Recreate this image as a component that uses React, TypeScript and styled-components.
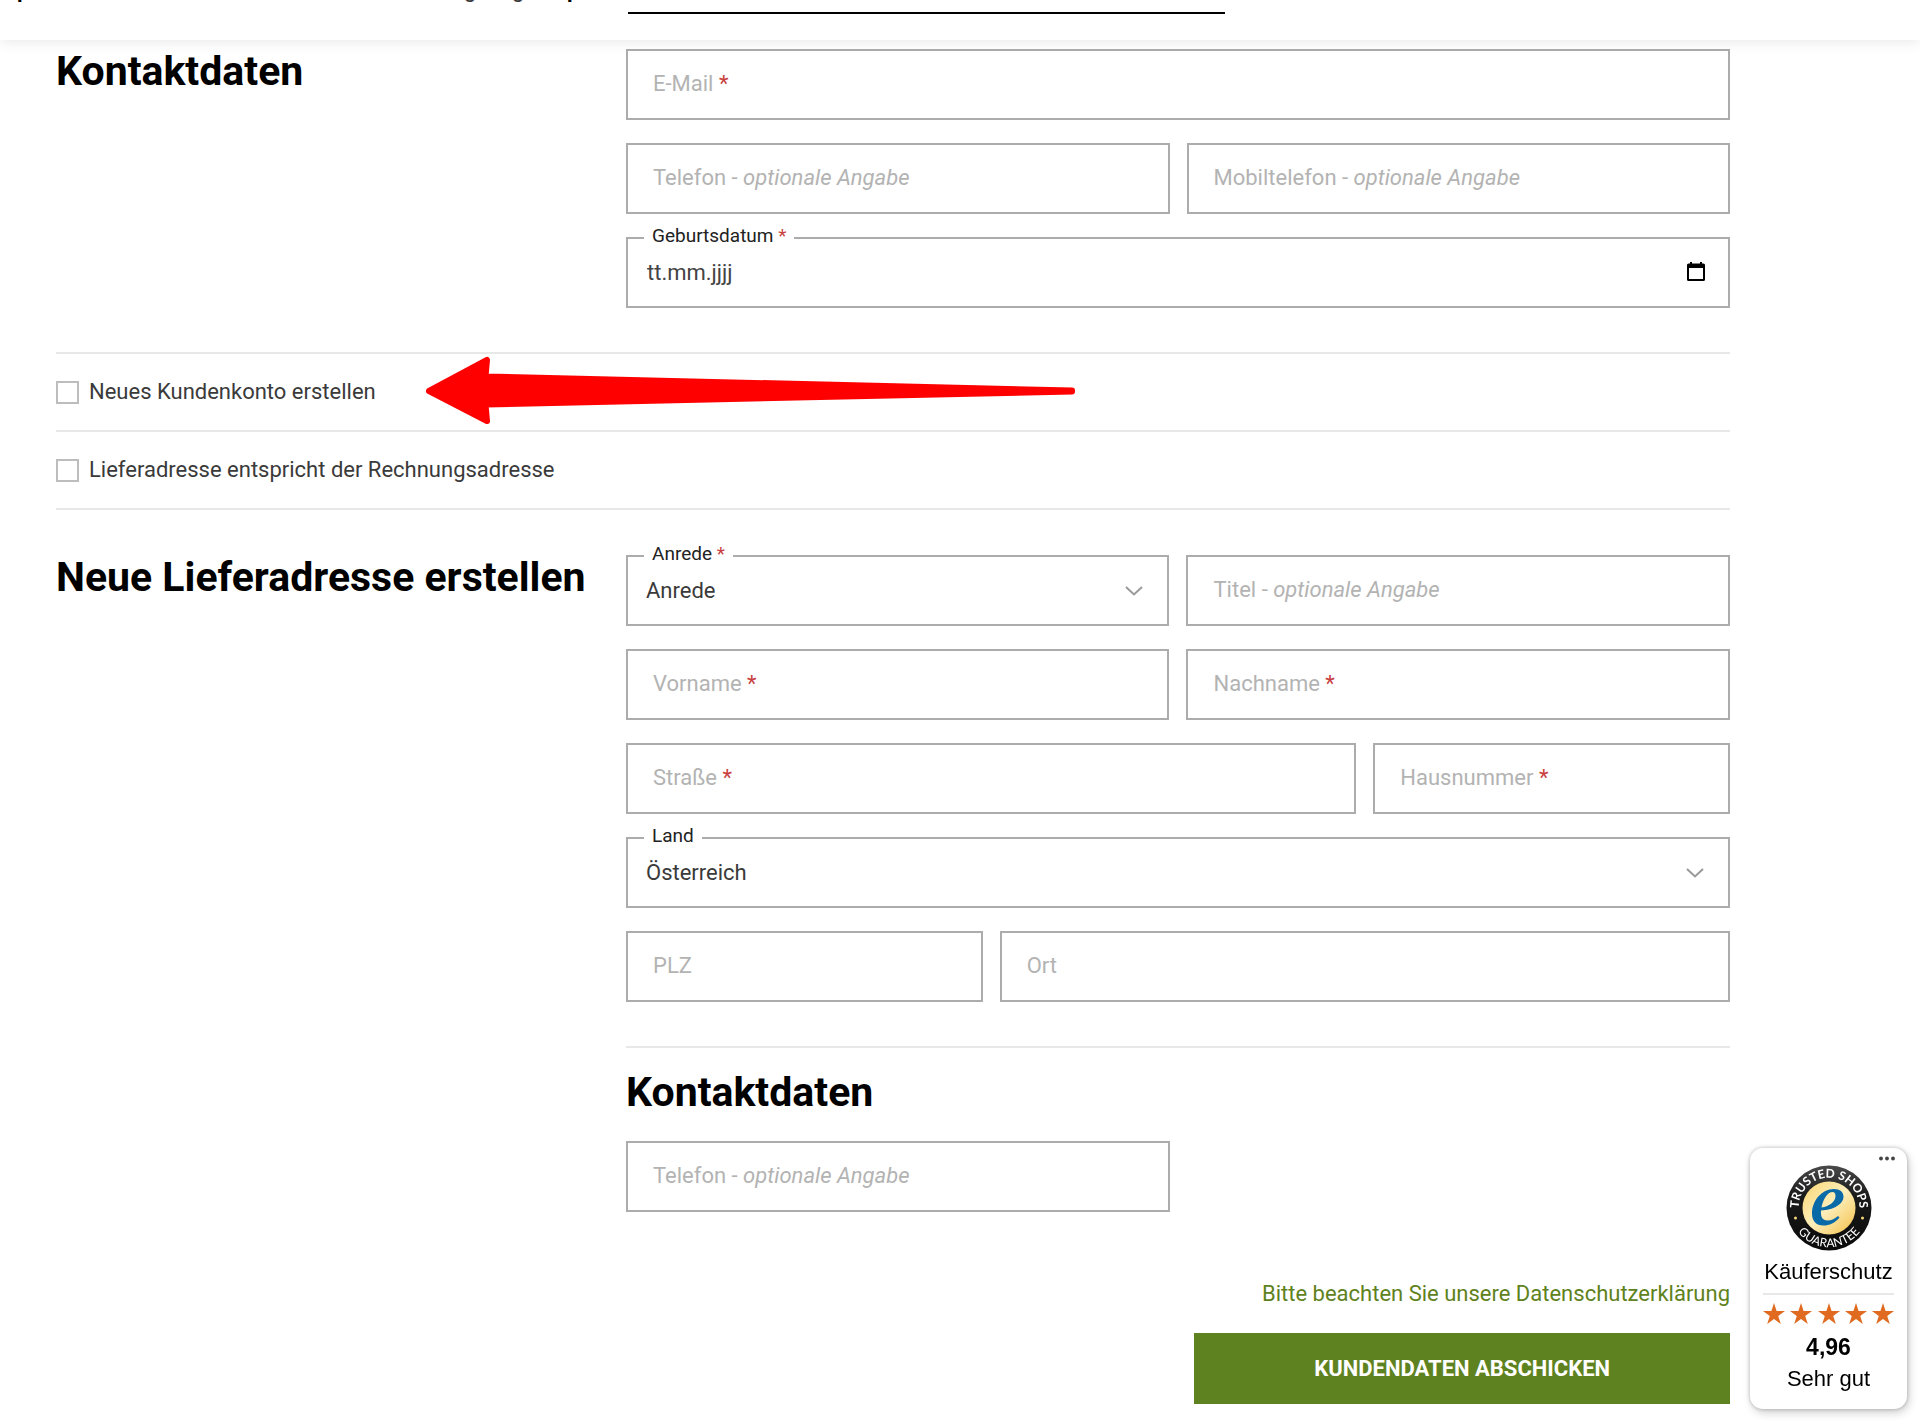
import React, { useId } from "react";
import type { ReactNode } from "react";
import styled, { createGlobalStyle } from "styled-components";

const color = {
  text: "#3a3a3a",
  heading: "#000000",
  muted: "#b3b3b3",
  border: "#acacac",
  rule: "#e8e8e8",
  required: "#c94040",
  green: "#5f8220",
  star: "#e06a20",
};

const GlobalStyle = createGlobalStyle`
  * { box-sizing: border-box; }
  body {
    margin: 0;
    background: #fff;
    color: ${color.text};
    font: 400 22px/26px Roboto, "Liberation Sans", sans-serif;
  }
`;

/* ---------- header ---------- */

const Header = styled.header`
  position: sticky;
  top: 0;
  z-index: 2;
  display: grid;
  grid-template-columns: 628px minmax(0, 597px) 1fr;
  align-items: start;
  height: 40px;
  background: #fff;
  box-shadow: 0 2px 14px rgba(0, 0, 0, 0.09);
`;

const SearchInput = styled.input`
  width: 100%;
  height: 14px;
  padding: 0;
  border: 0;
  border-bottom: 2px solid #000;
  background: transparent;
  outline: 0;
`;

const HeaderStrip = styled.div`
  display: flex;
  align-items: flex-end;
  height: 2px;
  overflow: hidden;
  line-height: 24px;
`;

const Tail = styled.span<{ $before: number; $bold?: boolean }>`
  flex: none;
  height: 24px;
  width: 12px;
  margin-left: ${(p) => p.$before}px;
  font-weight: ${(p) => (p.$bold ? 700 : 400)};
  color: ${(p) => (p.$bold ? color.heading : color.text)};
`;

/* ---------- form ---------- */

const Form = styled.form`
  padding: 9px 190px 17px 56px;
`;

const Section = styled.section<{ $top?: number }>`
  display: grid;
  grid-template-columns: 570px minmax(0, 1fr);
  padding-top: ${(p) => p.$top ?? 0}px;
`;

const Heading = styled.h2`
  margin: 0;
  color: ${color.heading};
  font-size: 41px;
  font-weight: 700;
  line-height: 44px;
`;

const Fields = styled.div`
  display: grid;
  grid-template-columns: repeat(6, minmax(0, 1fr));
  gap: 23px 17px;
`;

const FieldBox = styled.div<{ $span: number }>`
  position: relative;
  grid-column: span ${(p) => p.$span};
  height: 71px;
`;

const Input = styled.input`
  display: block;
  width: 100%;
  height: 100%;
  padding: 0 19px;
  border: 2px solid ${color.border};
  border-radius: 0;
  background: transparent;
  color: ${color.text};
  font: inherit;
  &::placeholder {
    color: #444;
    opacity: 1;
  }
`;

const Select = styled.select`
  display: block;
  width: 100%;
  height: 100%;
  padding: 0 60px 0 18px;
  border: 2px solid ${color.border};
  border-radius: 0;
  background: transparent;
  appearance: none;
  color: ${color.text};
  font: inherit;
`;

const InnerLabel = styled.label`
  position: absolute;
  top: 22px;
  left: 27px;
  color: ${color.muted};
  pointer-events: none;
`;

const FloatLabel = styled.label`
  position: absolute;
  top: -12px;
  left: 18px;
  padding: 0 8px;
  background: #fff;
  color: #222;
  font-size: 19px;
  line-height: 22px;
`;

const Required = styled.span`
  color: ${color.required};
`;

const Chevron = styled.svg`
  position: absolute;
  top: 31px;
  right: 26px;
  width: 18px;
  height: 10px;
  fill: none;
  stroke: #999;
  stroke-width: 2;
  pointer-events: none;
`;

const DateButton = styled.button`
  position: absolute;
  top: 24px;
  right: 24px;
  display: flex;
  width: 20px;
  height: 22px;
  padding: 0;
  border: 0;
  background: none;
`;

const OptionRow = styled.div`
  position: relative;
  display: flex;
  align-items: center;
  height: 78px;
  border-top: 2px solid ${color.rule};
`;

const Options = styled.div`
  margin-top: 44px;
  border-bottom: 2px solid ${color.rule};
`;

const OptionLabel = styled.label`
  display: flex;
  align-items: center;
  gap: 10px;
`;

const Checkbox = styled.input`
  appearance: none;
  width: 23px;
  height: 23px;
  margin: 0;
  border: 2px solid #bdbdbd;
  background: #fff;
`;

const Arrow = styled.svg`
  position: absolute;
  top: 1px;
  left: 370px;
  width: 650px;
  height: 70px;
  pointer-events: none;
`;

const SubSection = styled.div`
  grid-column: 2;
  display: grid;
  gap: 27px;
  margin-top: 44px;
  padding-top: 22px;
  border-top: 2px solid ${color.rule};
`;

const Actions = styled.div`
  display: flex;
  flex-direction: column;
  align-items: flex-end;
  gap: 26px;
  margin-top: 69px;
`;

const PrivacyLink = styled.a`
  color: ${color.green};
  text-decoration: none;
`;

const Submit = styled.button`
  width: 32%;
  height: 71px;
  border: 0;
  background: ${color.green};
  color: #fff;
  font: inherit;
  font-weight: 700;
  text-transform: uppercase;
`;

/* ---------- trust badge ---------- */

const Badge = styled.aside`
  position: fixed;
  right: 13px;
  bottom: 12px;
  z-index: 3;
  display: flex;
  flex-direction: column;
  align-items: center;
  width: 157px;
  padding: 17px 13px 14px;
  border-radius: 13px;
  background: #fff;
  box-shadow: 0 0 4px rgba(0, 0, 0, 0.25), 2px 4px 10px rgba(0, 0, 0, 0.18);
  color: #000;
  font-family: "Liberation Sans", Arial, sans-serif;
  line-height: 32px;
`;

const MoreButton = styled.button`
  position: absolute;
  top: 4px;
  right: 10px;
  display: flex;
  padding: 4px 2px;
  border: 0;
  background: none;
`;

const BadgeTitle = styled.div`
  align-self: stretch;
  margin-bottom: 8px;
  padding: 5px 0 5px;
  border-bottom: 2px solid ${color.rule};
  line-height: 32px;
  text-align: center;
  white-space: nowrap;
`;

const Stars = styled.div`
  display: flex;
  justify-content: space-between;
  align-self: stretch;
  margin-bottom: 7px;
`;

const Score = styled.strong`
  font-size: 23px;
  line-height: 32px;
`;

/* ---------- pieces ---------- */

type FieldProps = {
  label: string;
  span: number;
  required?: boolean;
  optional?: boolean;
  children?: ReactNode;
};

const Star = () => <Required>*</Required>;

function TextField({ label, span, required, optional }: FieldProps) {
  const id = useId();
  return (
    <FieldBox $span={span}>
      <Input id={id} type="text" />
      <InnerLabel htmlFor={id}>
        {label}
        {required && <> <Star /></>}
        {optional && <> - <em>optionale Angabe</em></>}
      </InnerLabel>
    </FieldBox>
  );
}

function SelectField({ label, span, required, children }: FieldProps) {
  const id = useId();
  return (
    <FieldBox $span={span}>
      <Select id={id}>{children}</Select>
      <FloatLabel htmlFor={id}>
        {label}
        {required && <> <Star /></>}
      </FloatLabel>
      <Chevron viewBox="0 0 18 10" aria-hidden="true">
        <path d="M1 1l8 7.500 8-7.500" />
      </Chevron>
    </FieldBox>
  );
}

function DateField({ label, span, required }: FieldProps) {
  const id = useId();
  return (
    <FieldBox $span={span}>
      <Input id={id} type="text" placeholder="tt.mm.jjjj" />
      <FloatLabel htmlFor={id}>
        {label}
        {required && <> <Star /></>}
      </FloatLabel>
      <DateButton type="button" aria-label="Kalender">
        <svg width="20" height="22" viewBox="0 0 20 22">
          <path
            fill="#000"
            fillRule="evenodd"
            d="M4 1h2v1.500h8V1h2v1.500h1.500q1.500 0 1.500 1.500v14.500q0 1.500-1.500 1.500h-15Q1 20 1 18.500V4q0-1.500 1.500-1.500H4zM3 7v11h14V7z"
          />
        </svg>
      </DateButton>
    </FieldBox>
  );
}

function TrustSeal() {
  return (
    <svg width="86" height="86" viewBox="0 0 86 86" role="img" aria-label="Trusted Shops Guarantee">
      <defs>
        <linearGradient id="gold" x1="0" y1="0" x2="1" y2="1">
          <stop offset="0" stopColor="#fbd774" />
          <stop offset="0.5" stopColor="#fdeebb" />
          <stop offset="1" stopColor="#f3bf45" />
        </linearGradient>
        <linearGradient id="ring" x1="0" y1="0" x2="0" y2="1">
          <stop offset="0" stopColor="#4a4a4a" />
          <stop offset="0.35" stopColor="#1a1a1a" />
          <stop offset="1" stopColor="#0a0a0a" />
        </linearGradient>
        <path id="upper" d="M12.900 47.200a30.400 30.400 0 1 1 60.200 0" />
        <path id="lower" d="M4.800 51a39 39 0 0 0 76.400 0" />
      </defs>
      <circle cx="43" cy="43" r="42.500" fill="url(#ring)" />
      <circle cx="43" cy="43" r="26.500" fill="url(#gold)" />
      <g fill="#fff" fontFamily="Lato, 'Open Sans', sans-serif" fontSize="12" fontWeight="700" textAnchor="middle">
        <text>
          <textPath href="#upper" startOffset="50%">TRUSTED SHOPS</textPath>
        </text>
        <text fontSize="12" fontWeight="400">
          <textPath href="#lower" startOffset="50%">GUARANTEE</textPath>
        </text>
      </g>
      <circle cx="9.500" cy="53" r="1.500" fill="#f8d878" />
      <circle cx="76.500" cy="53" r="1.500" fill="#f8d878" />
      <path
        fill="#0a6aa8"
        fillRule="evenodd"
        d="M53.500 52.500C49 58 43.500 60.500 37.500 60.500C30 60.500 26 56 26 48.500C26 36 35.500 24 48 24C54 24 57.500 27 57.500 31.500C57.500 39.500 47 45 35 45.500C34.500 52 36.500 55.500 41.500 55.500C45.500 55.500 49 53.500 52 51ZM35.500 42.500C43.500 41.500 49.500 36.500 49.500 31C49.500 28.500 48.500 27 46.500 27C41.500 27 37 34.500 35.500 42.500Z"
      />
    </svg>
  );
}

const StarIcon = () => (
  <svg width="22" height="21" viewBox="0 0 22 21" aria-hidden="true">
    <path
      fill={color.star}
      d="M11 0l2.600 8H22l-6.800 4.900 2.600 8.100L11 16l-6.800 5 2.600-8.100L0 8h8.400z"
    />
  </svg>
);

export default function App() {
  return (
    <>
      <GlobalStyle />
      <Header>
        <HeaderStrip aria-hidden="true">
          <Tail $before={17} $bold>p</Tail>
          <Tail $before={435}>g</Tail>
          <Tail $before={36}>g</Tail>
          <Tail $before={43} $bold>p</Tail>
        </HeaderStrip>
        <SearchInput type="search" aria-label="Suche" />
      </Header>
      <Form onSubmit={(e) => e.preventDefault()}>
        <Section>
          <Heading>Kontaktdaten</Heading>
          <Fields>
            <TextField label="E-Mail" span={6} required />
            <TextField label="Telefon" span={3} optional />
            <TextField label="Mobiltelefon" span={3} optional />
            <DateField label="Geburtsdatum" span={6} required />
          </Fields>
        </Section>

        <Options>
          <OptionRow>
            <OptionLabel>
              <Checkbox type="checkbox" />
              Neues Kundenkonto erstellen
            </OptionLabel>
            <Arrow viewBox="0 0 650 70" aria-hidden="true">
              <path
                fill="#f00"
                stroke="#f00"
                strokeWidth="6"
                strokeLinejoin="round"
                d="M3 36L61 5L59.500 21.500L646 35.500V36.500L59.500 49.500L61 66Z"
              />
            </Arrow>
          </OptionRow>
          <OptionRow>
            <OptionLabel>
              <Checkbox type="checkbox" />
              Lieferadresse entspricht der Rechnungsadresse
            </OptionLabel>
          </OptionRow>
        </Options>

        <Section $top={45}>
          <Heading>Neue Lieferadresse erstellen</Heading>
          <Fields>
            <SelectField label="Anrede" span={3} required>
              <option>Anrede</option>
            </SelectField>
            <TextField label="Titel" span={3} optional />
            <TextField label="Vorname" span={3} required />
            <TextField label="Nachname" span={3} required />
            <TextField label="Straße" span={4} required />
            <TextField label="Hausnummer" span={2} required />
            <SelectField label="Land" span={6}>
              <option>Österreich</option>
            </SelectField>
            <TextField label="PLZ" span={2} />
            <TextField label="Ort" span={4} />
          </Fields>
          <SubSection>
            <Heading>Kontaktdaten</Heading>
            <Fields>
              <TextField label="Telefon" span={3} optional />
            </Fields>
          </SubSection>
        </Section>

        <Actions>
          <PrivacyLink href="#datenschutz">Bitte beachten Sie unsere Datenschutzerklärung</PrivacyLink>
          <Submit type="submit">Kundendaten abschicken</Submit>
        </Actions>
      </Form>

      <Badge>
        <MoreButton type="button" aria-label="Mehr">
          <svg width="16" height="5" viewBox="0 0 16 5">
            <g fill="#444">
              <circle cx="2" cy="2.500" r="1.900" />
              <circle cx="8" cy="2.500" r="1.900" />
              <circle cx="14" cy="2.500" r="1.900" />
            </g>
          </svg>
        </MoreButton>
        <TrustSeal />
        <BadgeTitle>Käuferschutz</BadgeTitle>
        <Stars>
          {[1, 2, 3, 4, 5].map((n) => (
            <StarIcon key={n} />
          ))}
        </Stars>
        <Score>4,96</Score>
        <span>Sehr gut</span>
      </Badge>
    </>
  );
}
